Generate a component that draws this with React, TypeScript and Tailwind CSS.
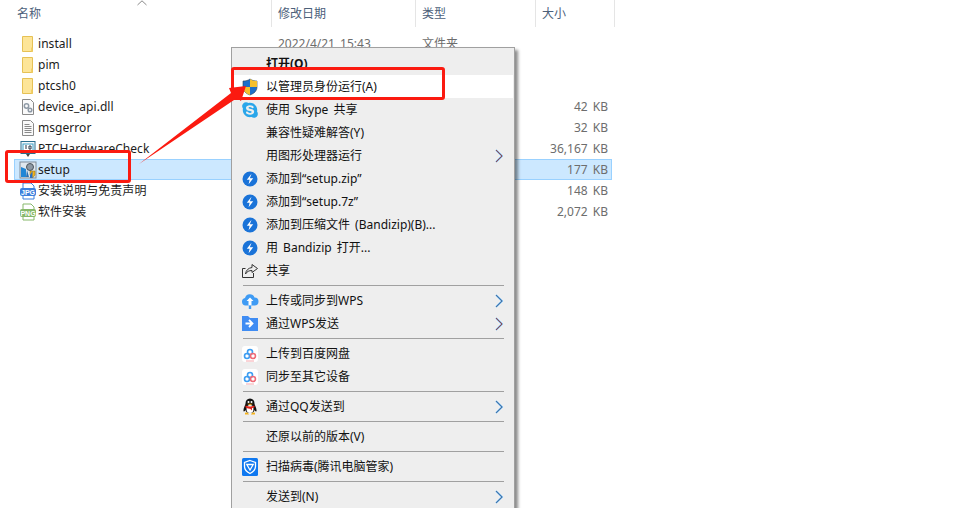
import { FaSkype } from "react-icons/fa"

const Folder = () => (
  <svg width="16" height="18" viewBox="0 0 16 18">
    <path d="M2.500 1.500h10v15h-10z" fill="#fde598" stroke="#e6c155" />
    <path d="M11 12.500h1.500v4H11z" fill="#f3cf66" />
  </svg>
)

const Page = ({ gear }: { gear?: boolean }) => (
  <svg width="16" height="18" viewBox="0 0 16 18">
    <path d="M2.500 1.500h8l3 3v12h-11z" fill="#fafafa" stroke="#8a8a8a" />
    {gear ? (
      <g fill="none" stroke="#8f9aa6" strokeWidth="1.500">
        <circle cx="6.500" cy="8" r="2.200" />
        <circle cx="10" cy="12" r="1.800" />
      </g>
    ) : (
      <path d="M4.500 5.500h5M4.500 7.500h7M4.500 9.500h7M4.500 11.500h7M4.500 13.500h7" stroke="#8a8a8a" />
    )}
  </svg>
)

const AppIcon = () => (
  <svg width="16" height="18" viewBox="0 0 16 18">
    <rect x="1" y="1.500" width="14" height="12" fill="#f4f8fb" stroke="#2a6f8f" />
    <rect x="3" y="4" width="10" height="7" fill="#fff" stroke="#3aa0c8" />
    <path d="M5 6h2M5 8h2M9 6h2v3H9z" stroke="#234" fill="none" />
    <path d="M6 14h4l-2 3z" fill="#444" />
  </svg>
)

const SetupIcon = () => (
  <svg width="18" height="18" viewBox="0 0 18 18">
    <rect x="1" y="1" width="16" height="16" fill="#dfe7ee" stroke="#7f8c99" />
    <path d="M2 6l5 2v8H2z" fill="#1f86d6" />
    <circle cx="11" cy="6" r="3.500" fill="#8d98a3" stroke="#4c555e" />
    <path d="M8 9l2 7H7z" fill="#2a6fb0" />
    <path d="M11 10h5v4l-2.500 3-2.500-3z" fill="#f2b21c" stroke="#8a6a10" strokeWidth=".5" />
    <path d="M13.500 10v7h-2.500v-3z" fill="#2a6fc4" />
  </svg>
)

const BadgeIcon = ({ label, color, shade }: { label: string; color: string; shade: string }) => (
  <svg width="18" height="18" viewBox="0 0 18 18">
    <path d="M4 1h8l3 3v13H4z" fill="#fff" stroke={shade} />
    <rect x="1" y="6" width="16" height="8" rx="2" fill={color} />
    <text x="9" y="12.800" textAnchor="middle" fontSize="7" fontWeight="700" fill="#fff" fontFamily="Liberation Sans, sans-serif">
      {label}
    </text>
  </svg>
)

const Shield = () => (
  <svg width="18" height="18" viewBox="0 0 18 18">
    <path d="M9 1c2 1.500 4 2 7 2v6c0 4-3 6.500-7 8-4-1.500-7-4-7-8V3c3 0 5-.5 7-2z" fill="#1d6fc9" stroke="#2c3e50" strokeWidth=".6" />
    <path d="M9 1c2 1.500 4 2 7 2v6H9zM9 9v8c-4-1.500-7-4-7-8z" fill="#f6c02c" />
  </svg>
)

const Bandizip = () => (
  <svg width="16" height="16" viewBox="0 0 16 16">
    <circle cx="8" cy="8" r="7.500" fill="#1a73d8" />
    <path d="M9.500 2.800L4.800 8.800h2.800l-1 4.400 4.600-6H7.900z" fill="#fff" />
  </svg>
)

const ShareIcon = () => (
  <svg width="18" height="16" viewBox="0 0 18 16" fill="none" stroke="#333">
    <path d="M12.500 10v4.500h-11v-9h3" />
    <path d="M11 1.500l5.500 4-5.500 4V7.500c-3 0-5 1-6.500 3.500 .5-4 3-6 6.500-6.500z" />
  </svg>
)

const CloudUp = () => (
  <svg width="18" height="18" viewBox="0 0 18 18">
    <path d="M4.500 13.500a3.800 3.800 0 0 1-.5-7.500 5 5 0 0 1 9.500-.5 4 4 0 0 1 0 8z" fill="#3f9bf4" />
    <path d="M9 5.500l3.500 3.500h-2v4.500h-3V9h-2z" fill="#fff" />
    <path d="M7.800 13.500h2.400v3.500H7.800z" fill="#3f9bf4" />
  </svg>
)

const FolderSend = () => (
  <svg width="16" height="15" viewBox="0 0 16 15">
    <path d="M0 0h6l2 2h8v13H0z" fill="#3f8cf3" />
    <path d="M3.500 7.500h6M7 3.800l3.500 3.700L7 11" fill="none" stroke="#fff" strokeWidth="1.800" />
  </svg>
)

const Baidu = () => (
  <svg width="16" height="16" viewBox="0 0 16 16">
    <rect width="16" height="16" rx="3" fill="#fff" />
    <g fill="none" strokeWidth="1.600">
      <circle cx="8" cy="6" r="2.500" stroke="#3c9df2" />
      <circle cx="5" cy="10" r="2.500" stroke="#3c9df2" />
      <circle cx="11" cy="10" r="2.500" stroke="#ef6a76" />
    </g>
    <path d="M4 15h8" stroke="#f6a8ae" />
  </svg>
)

const Penguin = () => (
  <svg width="16" height="18" viewBox="0 0 16 18">
    <path d="M8 .5c3 0 4.500 2.200 4.500 5 0 1.500 2.500 5 2 7.500-.4 1.200-1.500 0-2-1-.3 2-1.500 3-4.500 3s-4.200-1-4.500-3c-.5 1-1.600 2.200-2 1-.5-2.500 2-6 2-7.500 0-2.800 1.500-5 4.500-5z" fill="#111" />
    <ellipse cx="8" cy="11" rx="3.500" ry="4" fill="#fff" />
    <circle cx="6.500" cy="4" r="1" fill="#fff" />
    <circle cx="9.500" cy="4" r="1" fill="#fff" />
    <path d="M5 5.800h6l-3 1.500z" fill="#f3b21c" />
    <path d="M3.500 7.500c3 1.300 6 1.300 9 0v1.800c-1 .4-1.500 .6-2.500 .8v2.400l-1.800-1.800c-2 .2-3.400 -.3-4.700-1.400z" fill="#e2231a" />
    <path d="M3 15c1.500-.8 3-.5 4 1.500H3zM13 15c-1.500-.8-3-.5-4 1.500h4z" fill="#f3b21c" />
  </svg>
)

const Tencent = () => (
  <svg width="16" height="18" viewBox="0 0 16 18">
    <rect width="16" height="18" rx="1.500" fill="#0f78f0" />
    <path d="M8 2.500l5.500 2v4c0 3.200-2.500 5.500-5.500 7-3-1.500-5.500-3.800-5.500-7v-4z" fill="none" stroke="#fff" strokeWidth="1.300" />
    <path d="M4.800 6.500h6.400L8 12z" fill="none" stroke="#fff" strokeWidth="1.300" />
  </svg>
)

const Chevron = ({ warm }: { warm?: boolean }) => (
  <svg width="10" height="14" viewBox="0 0 10 14" fill="none">
    <path d="M2 1l6 6-6 6" stroke="#4aa0ea" strokeWidth="1.600" />
    <path d="M2 1l6 6-6 6" stroke={warm ? "#b0331f" : "#4a6a90"} strokeWidth=".8" />
  </svg>
)

type Row = { name: string; icon: React.ReactNode; date?: string; type?: string; size?: string; selected?: boolean }

const ROWS: Row[] = [
  { name: "install", icon: <Folder />, date: "2022/4/21 15:43", type: "文件夹" },
  { name: "pim", icon: <Folder /> },
  { name: "ptcsh0", icon: <Folder /> },
  { name: "device_api.dll", icon: <Page gear />, size: "42 KB" },
  { name: "msgerror", icon: <Page />, size: "32 KB" },
  { name: "PTCHardwareCheck", icon: <AppIcon />, size: "36,167 KB" },
  { name: "setup", icon: <SetupIcon />, size: "177 KB", selected: true },
  { name: "安装说明与免责声明", icon: <BadgeIcon label="JPG" color="#3d7fdc" shade="#3d7fdc" />, size: "148 KB" },
  { name: "软件安装", icon: <BadgeIcon label="PNG" color="#86b86a" shade="#86b86a" />, size: "2,072 KB" },
]

type Item = { label: string; icon?: React.ReactNode; arrow?: "cool" | "warm"; bold?: boolean; hover?: boolean }

const MENU: (Item | "sep")[] = [
  { label: "打开(O)", bold: true },
  { label: "以管理员身份运行(A)", icon: <Shield />, hover: true },
  { label: "使用 Skype 共享", icon: <FaSkype className="text-[#2aa6ea] text-[18px]" /> },
  { label: "兼容性疑难解答(Y)" },
  { label: "用图形处理器运行", arrow: "warm" },
  { label: "添加到“setup.zip”", icon: <Bandizip /> },
  { label: "添加到“setup.7z”", icon: <Bandizip /> },
  { label: "添加到压缩文件 (Bandizip)(B)...", icon: <Bandizip /> },
  { label: "用 Bandizip 打开...", icon: <Bandizip /> },
  { label: "共享", icon: <ShareIcon /> },
  "sep",
  { label: "上传或同步到WPS", icon: <CloudUp />, arrow: "cool" },
  { label: "通过WPS发送", icon: <FolderSend />, arrow: "warm" },
  "sep",
  { label: "上传到百度网盘", icon: <Baidu /> },
  { label: "同步至其它设备", icon: <Baidu /> },
  "sep",
  { label: "通过QQ发送到", icon: <Penguin />, arrow: "cool" },
  "sep",
  { label: "还原以前的版本(V)" },
  "sep",
  { label: "扫描病毒(腾讯电脑管家)", icon: <Tencent /> },
  "sep",
  { label: "发送到(N)", arrow: "cool" },
]

const FileRow = ({ row }: { row: Row }) => (
  <div className={`flex items-center h-[21px] ml-[14px] w-[598px] border ${row.selected ? "bg-[#cce8ff] border-[#99d1ff]" : "border-transparent"}`}>
    <div className="w-[23px] pl-[3px] flex justify-center shrink-0">{row.icon}</div>
    <div className="w-[240px] shrink-0 text-[#1c1c1c] tracking-[0.05px]">{row.name}</div>
    <div className="w-[144px] shrink-0 text-[#6d6d6d] [word-spacing:2px]">{row.date}</div>
    <div className="w-[90px] shrink-0 text-[#6d6d6d]">{row.type}</div>
    <div className="flex-1 text-right pr-[3px] text-[#6d6d6d] [word-spacing:2px]">{row.size}</div>
  </div>
)

const ContextMenu = () => (
  <div className="absolute left-[231px] top-[47px] w-[284px] bg-[#eeeeee] border border-[#a0a0a0] pt-[4px] px-px shadow-[3px_3px_3px_rgba(0,0,0,0.45)] text-[#111]">
    {MENU.map((item, i) =>
      item === "sep" ? (
        <div key={i} className="h-[7px] flex items-center pl-[10px] pr-[9px]">
          <div className="h-px w-full bg-[#a0a0a0]" />
        </div>
      ) : (
        <div key={i} className={`h-[23px] flex items-center ${item.hover ? "bg-white" : ""}`}>
          <div className="w-[33px] flex justify-center pl-px shrink-0">{item.icon}</div>
          <div className={`flex-1 [word-spacing:2px] ${item.bold ? "font-bold" : ""}`}>{item.label}</div>
          {item.arrow && (
            <div className="pr-[9px]">
              <Chevron warm={item.arrow === "warm"} />
            </div>
          )}
        </div>
      ),
    )}
  </div>
)

export default function App() {
  return (
    <div className="relative w-[963px] h-[508px] overflow-hidden bg-white text-[12px] font-['Noto_Sans','Noto_Sans_CJK_SC',sans-serif]">
      <div className="flex h-[27px] text-[#4c607a]">
        <div className="relative w-[271px] pl-[17px] pt-[5px]">
          名称
          <svg className="absolute left-[137px] top-0" width="10" height="6" viewBox="0 0 10 6" fill="none" stroke="#8a8a8a">
            <path d="M.5 5L5 .8 9.500 5" />
          </svg>
        </div>
        <div className="w-[144px] pl-[6px] pt-[5px] border-l border-[#e5e5e5]">修改日期</div>
        <div className="w-[120px] pl-[6px] pt-[5px] border-l border-[#e5e5e5]">类型</div>
        <div className="w-[80px] pl-[6px] pt-[5px] border-l border-r border-[#e5e5e5]">大小</div>
      </div>
      <div className="pt-[6px]">
        {ROWS.map((row) => (
          <FileRow key={row.name} row={row} />
        ))}
      </div>

      <ContextMenu />

      {/* red annotations drawn on top of the screenshot */}
      <div className="absolute left-[5px] top-[150px] w-[126px] h-[33px] border-[3px] border-[#fb1a10] rounded-[3px]" />
      <div className="absolute left-[231px] top-[67px] w-[214px] h-[33px] border-[3px] border-[#fb1a10] rounded-[3px]" />
      <svg className="absolute left-0 top-0" width="963" height="508" viewBox="0 0 963 508">
        <path d="M139 164L231 93 229 88 246 86 241 101 237 98z" fill="#fb1a10" />
      </svg>
    </div>
  )
}
